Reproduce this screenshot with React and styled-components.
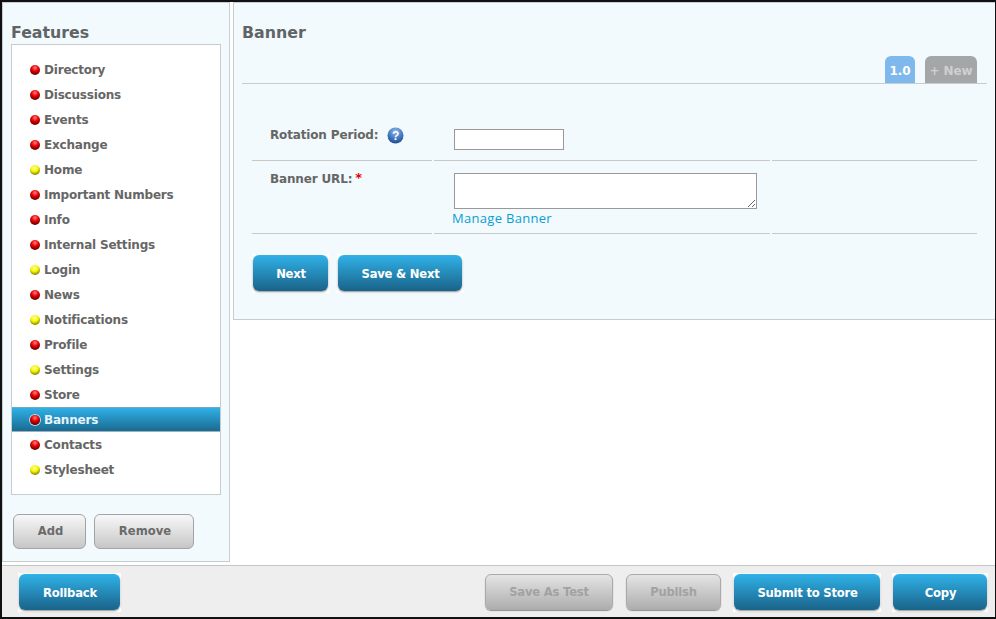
import React from 'react';
import styled, { createGlobalStyle, css } from 'styled-components';

const Global = createGlobalStyle`
  html, body { margin: 0; padding: 0; background: #fff; }
  body { font-family: "DejaVu Sans", Verdana, sans-serif; }
`;

const Frame = styled.div`
  width: 996px;
  height: 619px;
  box-sizing: border-box;
  border: 2px solid #111;
  border-right-width: 1px;
  display: flex;
  flex-direction: column;
  overflow: hidden;
`;

const Top = styled.div`
  flex: 1;
  display: flex;
  align-items: flex-start;
  gap: 3px;
  min-height: 0;
`;

const Sidebar = styled.aside`
  width: 228px;
  height: 560px;
  box-sizing: border-box;
  background: #f2fafd;
  border: 1px solid #c6cdd0;
  padding: 20px 8px 0 8px;
`;

const SideTitle = styled.h2`
  margin: 0 0 1px;
  font-size: 15.8px;
  line-height: 20px;
  font-weight: bold;
  color: #5f6466;
`;

const FeatureList = styled.ul`
  list-style: none;
  margin: 0;
  padding: 12px 0 13px;
  width: 210px;
  height: 451px;
  box-sizing: border-box;
  background: #fff;
  border: 1px solid #c6cdd0;
`;

const FeatureRow = styled.li`
  height: 25px;
  box-sizing: border-box;
  display: flex;
  align-items: center;
  gap: 4px;
  padding-left: 18px;
  font-size: 12px;
  letter-spacing: -0.2px;
  font-weight: bold;
  color: #666;
  ${p => p.$active && css`
    background: linear-gradient(#2fb0e6, #1b6a90);
    color: #e6f4fb;
    border-top: 1px solid #6fa9c4;
    border-bottom: 1px solid #9fb0b8;
  `}
`;

const Ball = styled.span`
  width: 10px;
  height: 10px;
  border-radius: 50%;
  flex: none;
  background: ${p => p.$yellow
    ? 'radial-gradient(circle at 45% 30%, #ffffa0 0, #f6f600 40%, #7a7a00 80%, #444 100%)'
    : 'radial-gradient(circle at 50% 28%, #ff8080 0, #ee0000 38%, #700000 75%, #300 100%)'};
  ${p => p.$active && css`box-shadow: 0 0 0 1px rgba(255, 255, 255, 0.7);`}
`;

const SideActions = styled.div`
  display: flex;
  gap: 8px;
  padding: 19px 2px 0;
`;

const GreyButton = styled.button`
  height: 35px;
  box-sizing: border-box;
  width: ${p => p.$w}px;
  border: 1px solid #a3a3a3;
  border-radius: 6px;
  background: linear-gradient(#f8f8f8, #c6c6c6);
  color: #6b6b6b;
  font: bold 11.6px "DejaVu Sans", Verdana, sans-serif;
  padding: 0 0 2px 2px;
`;

const Main = styled.main`
  flex: 1;
  height: 318px;
  box-sizing: border-box;
  background: #f2fafd;
  border: 1px solid #c6cdd0;
  border-right: 0;
  padding: 20px 8px 0 8px;
`;

const MainTitle = styled.h1`
  margin: 0;
  font-size: 15.8px;
  line-height: 20px;
  font-weight: bold;
  color: #5f6466;
`;

const Tabs = styled.div`
  margin-top: 13px;
  height: 28px;
  box-sizing: border-box;
  border-bottom: 1px solid #c6cdd0;
  display: flex;
  justify-content: flex-end;
  align-items: flex-end;
  gap: 10px;
  padding-right: 10px;
`;

const Tab = styled.div`
  height: 27px;
  width: ${p => p.$w}px;
  box-sizing: border-box;
  padding-top: 3px;
  border-radius: 6px 6px 0 0;
  display: flex;
  align-items: center;
  justify-content: center;
  font-size: 12px;
  letter-spacing: -0.1px;
  font-weight: bold;
  background: ${p => (p.$current ? '#7fb8ec' : '#a3a7a7')};
  color: ${p => (p.$current ? '#fff' : '#d0d0d0')};
`;

const FormGrid = styled.div`
  margin: 0 10px 0 10px;
  display: grid;
  grid-template-columns: 180px 336px 205px;
  column-gap: 2px;
`;

const Cell = styled.div`
  border-bottom: 1px solid #c8c8c8;
  height: ${p => p.$h}px;
  box-sizing: border-box;
  padding-top: ${p => p.$top}px;
  padding-left: ${p => p.$left || 0}px;
`;

const Label = styled.label`
  display: flex;
  align-items: flex-start;
  font-size: 12px;
  letter-spacing: -0.15px;
  font-weight: bold;
  line-height: 16px;
  color: #666;
`;

const Star = styled.span`
  color: #e00000;
  margin-left: 3px;
  margin-top: -1px;
  font-size: 13px;
`;

const Help = styled.svg`
  width: 17px;
  height: 17px;
  margin-left: 9px;
  flex: none;
`;

const TextInput = styled.input`
  display: block;
  width: 110px;
  height: 21px;
  box-sizing: border-box;
  border: 1px solid #999;
  background: #fff;
  padding: 0;
`;

const TextArea = styled.textarea`
  display: block;
  width: 303px;
  height: 36px;
  box-sizing: border-box;
  border: 1px solid #999;
  background: #fff;
  padding: 0;
  resize: both;
`;

const ManageLink = styled.a`
  display: block;
  margin: 1px 0 0 -2px;
  font-size: 13px;
  line-height: 16px;
  color: #0a9ed0;
  text-decoration: none;
  font-family: "Open Sans", sans-serif;
  letter-spacing: 0.3px;
`;

const FormActions = styled.div`
  display: flex;
  gap: 10px;
  padding: 21px 0 0 11px;
  isolation: isolate;
`;

// the square white backing lies behind the rounded button
const BlueButton = styled.button`
  position: relative;
  height: 36px;
  width: ${p => p.$w}px;
  box-sizing: border-box;
  padding: 1px 0 0 1px;
  border: 0;
  border-radius: 6px;
  background: linear-gradient(#30b2e8, #1a6389);
  box-shadow: 0 1px 2px rgba(0, 0, 0, 0.45);
  color: #fff;
  font: bold 11.6px "DejaVu Sans", Verdana, sans-serif;
  letter-spacing: -0.22px;

  &::before {
    content: '';
    position: absolute;
    inset: -1px -1px -2px;
    background: #fff;
    z-index: -1;
  }
`;

const DisabledButton = styled.button`
  height: 36px;
  width: ${p => p.$w}px;
  box-sizing: border-box;
  padding: 0;
  border: 1px solid #aaa;
  border-radius: 6px;
  background: linear-gradient(#e4e4e4, #aeaeae);
  box-shadow: 0 1px 1px rgba(0, 0, 0, 0.4);
  color: #a2a2a2;
  font: bold 11.6px "DejaVu Sans", Verdana, sans-serif;
  letter-spacing: -0.22px;
`;

const Footer = styled.footer`
  height: 52px;
  flex: none;
  box-sizing: border-box;
  background: #eee;
  border-top: 1px solid #c6c6c6;
  display: flex;
  align-items: flex-start;
  padding: 8px 8px 0 17px;
  isolation: isolate;
`;

const Spacer = styled.div`
  flex: 1;
`;

const FooterGroup = styled.div`
  display: flex;
  gap: 13px;
`;

const features = [
  ['Directory'], ['Discussions'], ['Events'], ['Exchange'], ['Home', true],
  ['Important Numbers'], ['Info'], ['Internal Settings'], ['Login', true], ['News'],
  ['Notifications', true], ['Profile'], ['Settings', true], ['Store'], ['Banners'],
  ['Contacts'], ['Stylesheet', true],
];

const App = () => (
  <>
    <Global />
    <Frame>
      <Top>
        <Sidebar>
          <SideTitle>Features</SideTitle>
          <FeatureList>
            {features.map(([name, yellow]) => (
              <FeatureRow key={name} $active={name === 'Banners'}>
                <Ball $yellow={yellow} $active={name === 'Banners'} />
                {name}
              </FeatureRow>
            ))}
          </FeatureList>
          <SideActions>
            <GreyButton $w={73}>Add</GreyButton>
            <GreyButton $w={100}>Remove</GreyButton>
          </SideActions>
        </Sidebar>
        <Main>
          <MainTitle>Banner</MainTitle>
          <Tabs>
            <Tab $w={30} $current>1.0</Tab>
            <Tab $w={52}>+ New</Tab>
          </Tabs>
          <FormGrid>
            <Cell $h={77} $top={43} $left={18}>
              <Label>
                Rotation Period:
                <Help viewBox="0 0 17 17">
                  <defs>
                    <radialGradient id="helpFill" cx="50%" cy="25%" r="80%">
                      <stop offset="0" stopColor="#8fb8ea" />
                      <stop offset="0.6" stopColor="#3f74bd" />
                      <stop offset="1" stopColor="#1d4488" />
                    </radialGradient>
                  </defs>
                  <circle cx="8.5" cy="8.5" r="8" fill="url(#helpFill)" />
                  <text x="8.5" y="13" textAnchor="middle" fontSize="12" fontWeight="bold" fill="#fff" fontFamily="Liberation Sans, sans-serif">?</text>
                </Help>
              </Label>
            </Cell>
            <Cell $h={77} $top={45} $left={20}>
              <TextInput />
            </Cell>
            <Cell $h={77} />
            <Cell $h={73} $top={10} $left={18}>
              <Label>
                Banner URL:<Star>*</Star>
              </Label>
            </Cell>
            <Cell $h={73} $top={12} $left={20}>
              <TextArea />
              <ManageLink href="#">Manage Banner</ManageLink>
            </Cell>
            <Cell $h={73} />
          </FormGrid>
          <FormActions>
            <BlueButton $w={75}>Next</BlueButton>
            <BlueButton $w={124}>Save &amp; Next</BlueButton>
          </FormActions>
        </Main>
      </Top>
      <Footer>
        <BlueButton $w={101}>Rollback</BlueButton>
        <Spacer />
        <FooterGroup>
          <DisabledButton $w={128}>Save As Test</DisabledButton>
          <DisabledButton $w={95}>Publish</DisabledButton>
          <BlueButton $w={146}>Submit to Store</BlueButton>
          <BlueButton $w={94}>Copy</BlueButton>
        </FooterGroup>
      </Footer>
    </Frame>
  </>
);

export default App;
